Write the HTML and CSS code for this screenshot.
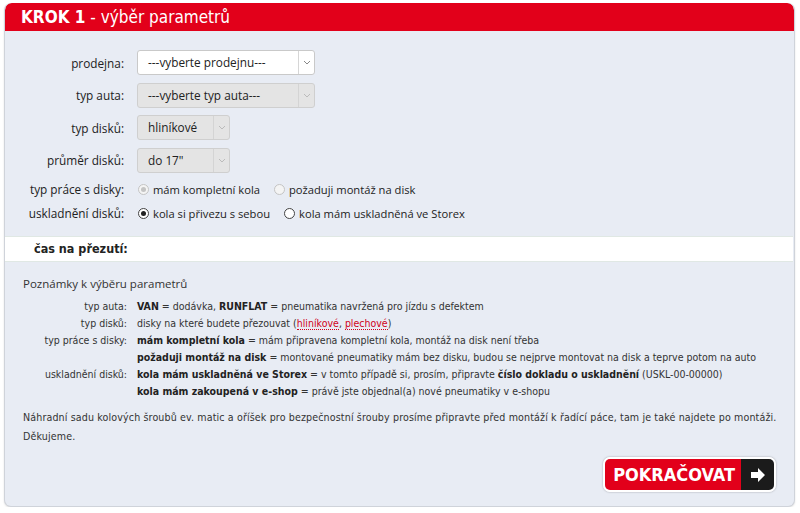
FILE: index.html
```html
<!DOCTYPE html>
<html lang="cs">
<head>
<meta charset="utf-8">
<title>KROK 1 - výběr parametrů</title>
<link rel="stylesheet" href="styles.css">
</head>
<body>
<div class="box">
  <div class="head"><b>KROK 1</b> - výběr parametrů</div>
  <div class="form">
    <div class="row sel-row">
      <span class="lbl">prodejna:</span>
      <div class="select w-wide"><span class="val">---vyberte prodejnu---</span><span class="arr"><svg width="8" height="5" viewBox="0 0 8 5"><path d="M1 1l3 3 3-3" fill="none" stroke="#888" stroke-width="1"/></svg></span></div>
    </div>
    <div class="row sel-row">
      <span class="lbl">typ auta:</span>
      <div class="select w-wide dis"><span class="val">---vyberte typ auta---</span><span class="arr"><svg width="8" height="5" viewBox="0 0 8 5"><path d="M1 1l3 3 3-3" fill="none" stroke="#bbb" stroke-width="1"/></svg></span></div>
    </div>
    <div class="row sel-row">
      <span class="lbl">typ disků:</span>
      <div class="select w-narrow dis"><span class="val">hliníkové</span><span class="arr"><svg width="8" height="5" viewBox="0 0 8 5"><path d="M1 1l3 3 3-3" fill="none" stroke="#bbb" stroke-width="1"/></svg></span></div>
    </div>
    <div class="row sel-row last">
      <span class="lbl">průměr disků:</span>
      <div class="select w-narrow dis"><span class="val">do 17"</span><span class="arr"><svg width="8" height="5" viewBox="0 0 8 5"><path d="M1 1l3 3 3-3" fill="none" stroke="#bbb" stroke-width="1"/></svg></span></div>
    </div>
    <div class="row rad-row">
      <span class="lbl">typ práce s disky:</span>
      <div class="radios">
        <span class="opt"><span class="radio dis-r on"></span>mám kompletní kola</span>
        <span class="opt"><span class="radio dis-r"></span>požaduji montáž na disk</span>
      </div>
    </div>
    <div class="row rad-row">
      <span class="lbl">uskladnění disků:</span>
      <div class="radios">
        <span class="opt"><span class="radio on"></span>kola si přivezu s sebou</span>
        <span class="opt"><span class="radio"></span>kola mám uskladněná ve Storex</span>
      </div>
    </div>
  </div>
  <div class="time">čas na přezutí:</div>
  <div class="notes">
    <div class="notes-title">Poznámky k výběru parametrů</div>
    <div class="ngrid">
      <span class="nl">typ auta:</span><span><b>VAN</b> = dodávka, <b>RUNFLAT</b> = pneumatika navržená pro jízdu s defektem</span>
      <span class="nl">typ disků:</span><span>disky na které budete přezouvat (<a class="lnk">hliníkové</a>, <a class="lnk">plechové</a>)</span>
      <span class="nl">typ práce s disky:</span><span><b>mám kompletní kola</b> = mám připravena kompletní kola, montáž na disk není třeba</span>
      <span class="nl"></span><span><b>požaduji montáž na disk</b> = montované pneumatiky mám bez disku, budou se nejprve montovat na disk a teprve potom na auto</span>
      <span class="nl">uskladnění disků:</span><span><b>kola mám uskladněná ve Storex</b> = v tomto případě si, prosím, připravte <b>číslo dokladu o uskladnění</b> (USKL-00-00000)</span>
      <span class="nl"></span><span><b>kola mám zakoupená v e-shop</b> = právě jste objednal(a) nové pneumatiky v e-shopu</span>
    </div>
    <p class="foot">Náhradní sadu kolových šroubů ev. matic a oříšek pro bezpečnostní šrouby prosíme připravte před montáží k řadící páce, tam je také najdete po montáži.<br>Děkujeme.</p>
  </div>
  <div class="actions">
    <a class="btn"><span class="btn-t">POKRAČOVAT</span><span class="btn-a"><svg width="16" height="16" viewBox="0 0 16 16"><path d="M1 5h7V1l7 7-7 7v-4H1z" fill="#fff"/></svg></span></a>
  </div>
</div>
</body>
</html>
```

FILE: styles.css
```css
html, body { margin: 0; padding: 0; background: #fff; }
body { font-family: "Open Sans", "DejaVu Sans", sans-serif; color: #222; }

.box {
  margin: 3px 5px 0 4px;
  height: 504px;
  box-sizing: border-box;
  background: #e8ecf4;
  border: 1px solid #cfd3da;
  border-top: 0;
  border-radius: 7px;
  box-shadow: 0 1px 2px rgba(0,0,0,0.12);
  overflow: hidden;
}
.head {
  height: 28px;
  background: #e2001a;
  color: #fff;
  font-family: "DejaVu Sans Condensed", "DejaVu Sans", sans-serif;
  font-size: 17px;
  line-height: 29px;
  padding-left: 16px;
  border-radius: 7px 7px 0 0;
}
.head b { font-weight: bold; }

.form { padding: 19px 0 11px; }
.row { display: grid; grid-template-columns: 119px auto; column-gap: 13px; align-items: center; }
.sel-row { height: 25px; margin-bottom: 7.5px; }
.sel-row.last { margin-bottom: 4.5px; }
.rad-row { height: 24px; }
.lbl { text-align: right; font-size: 11.8px; color: #222; }

.select {
  display: flex;
  height: 25px;
  box-sizing: border-box;
  border: 1px solid #c9c9c9;
  border-radius: 3px;
  background: #fff;
  font-size: 11.8px;
  align-items: stretch;
}
.select .val { flex: 1; padding-left: 10px; line-height: 23px; white-space: nowrap; }
.select .arr { width: 15px; border-left: 1px solid #d6d6d6; display: flex; align-items: center; justify-content: center; }
.select.dis { background: #e4e4e4; border-color: #cfcfcf; }
.select.dis .arr { border-left-color: #d4d4d4; }
.w-wide { width: 178px; }
.w-narrow { width: 93px; }

.radios { display: flex; gap: 13px; font-size: 11.2px; }
.opt { display: flex; align-items: center; white-space: nowrap; }
.radio {
  width: 11px; height: 11px; box-sizing: border-box;
  border: 1px solid #444; border-radius: 50%;
  margin: 0 4px 0 1px; background: #fff; position: relative;
}
.radio.on::after {
  content: ""; position: absolute; left: 2px; top: 2px; width: 5px; height: 5px; border-radius: 50%; background: #222;
}
.radio.dis-r { border-color: #c4c4c4; background: #f4f4f4; }
.radio.dis-r.on::after { background: #c4c4c4; }

.time {
  height: 26px;
  background: #fff;
  border-top: 1px solid #e0e8e4;
  border-bottom: 1px solid #e0e8e4;
  box-sizing: border-box;
  margin-right: 1px;
  font-family: "DejaVu Sans Condensed", "DejaVu Sans", sans-serif;
  font-size: 12.5px;
  font-weight: bold;
  line-height: 24px;
  padding-left: 29px;
}

.notes { padding: 14px 0 0 18px; }
.notes-title { font-size: 11.5px; color: #333; margin-bottom: 7px; }
.ngrid {
  display: grid;
  grid-template-columns: 104px auto;
  column-gap: 10px;
  font-family: "DejaVu Sans Condensed", "DejaVu Sans", sans-serif;
  font-size: 10.5px;
  line-height: 17px;
  color: #333;
}
.nl { text-align: right; }
.ngrid b { color: #222; }
.lnk { color: #d0021b; border-bottom: 1px dotted #d0021b; }
.foot {
  margin: 8px 0 0 0;
  font-family: "DejaVu Sans Condensed", "DejaVu Sans", sans-serif;
  font-size: 10.6px;
  letter-spacing: 0.13px;
  line-height: 19px;
  color: #333;
}

.actions { display: flex; justify-content: flex-end; padding: 11px 18px 0 0; }
.btn {
  display: flex;
  height: 35px;
  box-sizing: border-box;
  border: 2px solid #fff;
  border-radius: 7px;
  overflow: hidden;
  box-shadow: 0 0 2px rgba(0,0,0,0.35);
}
.btn-t {
  background: #e2001a; color: #fff;
  font-family: "DejaVu Sans Condensed", "DejaVu Sans", sans-serif;
  font-weight: bold; font-size: 18px; line-height: 31px;
  padding: 0 6px 0 8px;
}
.btn-a { background: #1b1b1b; width: 33px; display: flex; align-items: center; justify-content: center; }
```
